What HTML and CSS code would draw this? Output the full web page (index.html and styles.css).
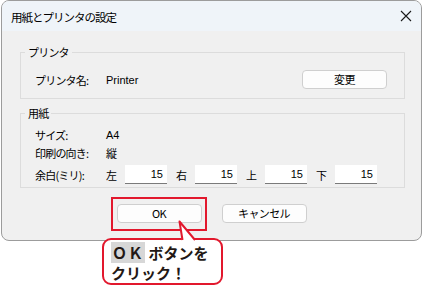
FILE: index.html
```html
<!DOCTYPE html>
<html lang="ja">
<head>
<meta charset="utf-8">
<link rel="stylesheet" href="styles.css">
</head>
<body>
<div class="stage">
  <div class="window">
    <div class="titlebar">
      <span class="title">用紙とプリンタの設定</span>
      <svg class="close" width="12" height="12" viewBox="0 0 12 12"><path d="M1 1 L11 11 M11 1 L1 11" stroke="#1a1a1a" stroke-width="1.1" fill="none"/></svg>
    </div>
    <div class="content">
      <div class="group g1">
        <div class="legend">プリンタ</div>
        <div class="row printer-row">
          <span class="label">プリンタ名:</span>
          <span class="value latin">Printer</span>
          <button class="btn change">変更</button>
        </div>
      </div>
      <div class="group g2">
        <div class="legend">用紙</div>
        <div class="row r1"><span class="label">サイズ:</span><span class="value latin">A4</span></div>
        <div class="row r2"><span class="label">印刷の向き:</span><span class="value">縦</span></div>
        <div class="row r3">
          <span class="label">余白(ミリ):</span>
          <span class="unit"><span class="side">左</span><span class="field">15</span></span>
          <span class="unit"><span class="side">右</span><span class="field">15</span></span>
          <span class="unit"><span class="side">上</span><span class="field">15</span></span>
          <span class="unit"><span class="side">下</span><span class="field">15</span></span>
        </div>
      </div>
      <div class="actions">
        <button class="btn">OK</button>
        <button class="btn">キャンセル</button>
      </div>
    </div>
  </div>
  <div class="highlight"></div>
  <div class="bubble">
    <div class="line"><span class="ok">ＯＫ</span> ボタンを</div>
    <div class="line">クリック！</div>
  </div>
  <svg class="tail" width="30" height="26" viewBox="0 0 30 26">
    <polygon points="10,3 12,22 25,22" fill="#fff"/>
    <polyline points="12.5,21 9.5,2.5 25,21" fill="none" stroke="#e2182d" stroke-width="2" stroke-linejoin="round"/>
  </svg>
</div>
</body>
</html>
```
FILE: styles.css
```css
* { box-sizing: border-box; }
html, body { margin: 0; padding: 0; background: #fff; }
body {
  font-family: "Noto Sans CJK JP", "Noto Sans", sans-serif;
  font-size: 11px;
  color: #000;
}
.stage { position: relative; width: 422px; height: 287px; }
.window {
  margin-left: 1px;
  width: 421px;
  height: 241px;
  border: 1px solid #9c9c9c;
  border-radius: 8px;
  background: #f0f0f0;
  overflow: hidden;
}
.titlebar {
  height: 30px;
  background: #eff4f9;
  display: flex;
  align-items: center;
  justify-content: space-between;
  padding: 0 9px 0 9px;
}
.title { font-size: 11.5px; letter-spacing: -1px; line-height: 14px; padding-top: 1px; }
.content { padding: 21px 16px 0 18px; }
.group {
  border: 1px solid #dcdcdc;
  padding: 0 17px 0 14px;
}
.legend {
  width: fit-content;
  height: 14px;
  line-height: 14px;
  margin: -8px 0 0 -10px;
  padding: 0 3px;
  background: #f0f0f0;
  letter-spacing: -0.8px;
}
.row { display: flex; align-items: center; }
.label { width: 71px; letter-spacing: -0.8px; }
.value { letter-spacing: -0.5px; }
.latin { font-family: "Liberation Sans", Arial, sans-serif; font-size: 11px; letter-spacing: 0; }
.g1 { padding-bottom: 9px; }
.printer-row { margin-top: 11px; height: 19px; }
.change { margin-left: auto; width: 86px; }
.g2 { margin-top: 14px; padding-bottom: 3px; }
.r1 { margin-top: 6px; height: 18px; }
.r2 { height: 18px; }
.r3 { margin-top: 3px; height: 19px; }
.unit { display: flex; align-items: center; width: 70px; }
.side { width: 19px; }
.field {
  width: 42px;
  height: 19px;
  background: #fff;
  border-bottom: 1px solid #7a7a7a;
  text-align: right;
  padding-right: 4px;
  line-height: 18px;
  font-family: "Liberation Sans", Arial, sans-serif;
  font-size: 11px;
}
.btn {
  height: 19px;
  width: 85px;
  padding: 0;
  background: #fdfdfd;
  border: 1px solid #cfcfcf;
  border-radius: 4px;
  font-family: "Noto Sans CJK JP", sans-serif;
  font-size: 11px;
  letter-spacing: -0.6px;
  color: #000;
  line-height: 17px;
}
.actions {
  display: flex;
  justify-content: center;
  gap: 20px;
  margin-top: 16px;
  padding-right: 2px;
}
.highlight {
  position: absolute;
  left: 111px;
  top: 197px;
  width: 96px;
  height: 34px;
  border: 2px solid #e2182d;
}
.bubble {
  position: absolute;
  left: 102px;
  top: 238px;
  width: 121px;
  height: 47px;
  background: #fff;
  border: 2px solid #e2182d;
  border-radius: 9px;
  padding: 3px 0 0 7px;
  font-weight: 700;
  font-size: 15px;
  line-height: 20px;
  color: #231815;
}
.line { white-space: nowrap; letter-spacing: 0; height: 20px; }
.ok { background: #d7d7d7; padding: 0 1px; letter-spacing: 1px; }
.tail { position: absolute; left: 170px; top: 219px; }
```
